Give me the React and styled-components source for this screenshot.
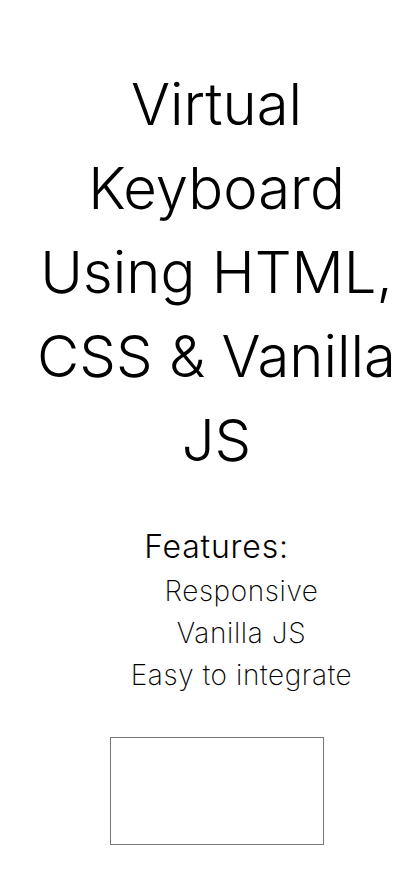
import React from 'react';
import styled, { createGlobalStyle } from 'styled-components';

const GlobalStyle = createGlobalStyle`
  body {
    margin: 0;
    background: #fff;
    font-family: 'Inter', 'Lato', sans-serif;
  }
`;

const features = ['Responsive', 'Vanilla JS', 'Easy to integrate'];

const App = () => {
  return (
    <Page>
      <GlobalStyle />
      <Title>Virtual Keyboard Using HTML, CSS &amp; Vanilla JS</Title>
      <Features>
        <FeatureHeading>Features:</FeatureHeading>
        <FeatureList>
          {features.map((item) => (
            <FeatureItem key={item}>{item}</FeatureItem>
          ))}
        </FeatureList>
      </Features>
      <KeyboardBox />
    </Page>
  );
};

const Page = styled.div`
  display: flex;
  flex-direction: column;
  align-items: center;
  padding: 62px 0 40px 20px;
  color: #000;
`;

const Title = styled.h1`
  width: 360px;
  margin: 0;
  text-align: center;
  font-size: 58px;
  font-weight: 300;
  line-height: 84px;
`;

const Features = styled.div`
  display: flex;
  flex-direction: column;
  align-items: center;
  margin-top: 45px;
`;

const FeatureHeading = styled.h2`
  margin: 0;
  font-size: 32px;
  font-weight: 300;
  letter-spacing: 0.8px;
  line-height: 40px;
`;

const FeatureList = styled.ul`
  list-style: none;
  margin: 3px 0 0;
  padding: 0 0 0 50px;
  display: flex;
  flex-direction: column;
  align-items: center;
`;

const FeatureItem = styled.li`
  font-size: 28px;
  font-weight: 200;
  letter-spacing: 0.6px;
  line-height: 42px;
  color: #000;
`;

const KeyboardBox = styled.div`
  width: 212px;
  height: 106px;
  margin-top: 41px;
  border: 1px solid #777;
`;

export default App;
